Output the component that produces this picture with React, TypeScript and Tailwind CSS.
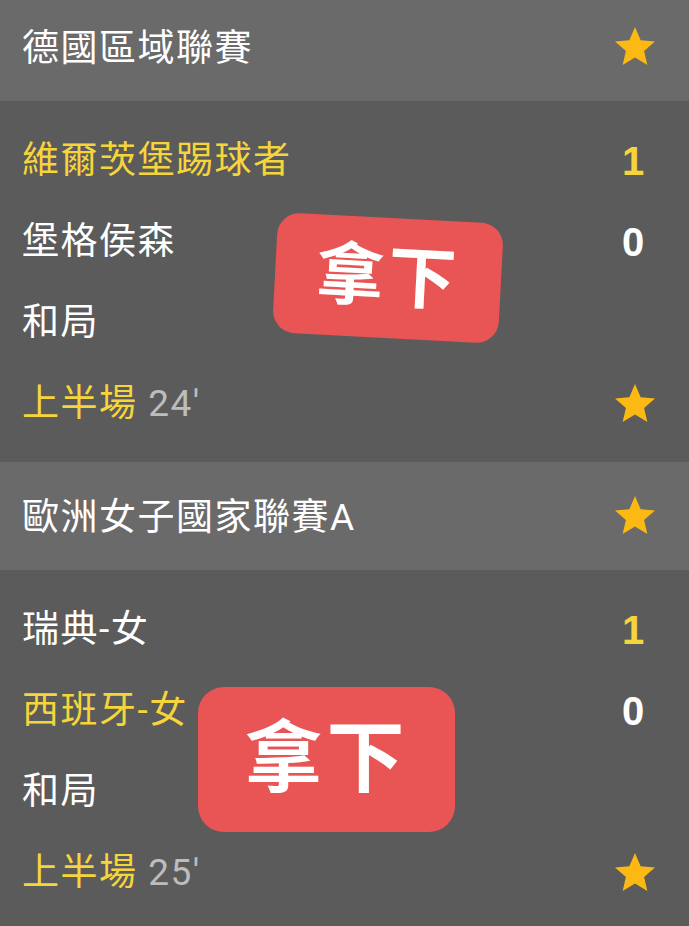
import React from "react";

const FONT = { fontFamily: 'Roboto, "Noto Sans CJK TC", sans-serif' };

type Team = { name: string; score: number; highlight: boolean };

interface MatchData {
  league: string;
  teams: Team[];
  half: string;
  minute: string;
  stamp: "tilted" | "flat";
}

const matches: MatchData[] = [
  {
    league: "德國區域聯賽",
    teams: [
      { name: "維爾茨堡踢球者", score: 1, highlight: true },
      { name: "堡格侯森", score: 0, highlight: false },
    ],
    half: "上半場",
    minute: "24'",
    stamp: "tilted",
  },
  {
    league: "歐洲女子國家聯賽A",
    teams: [
      { name: "瑞典-女", score: 1, highlight: false },
      { name: "西班牙-女", score: 0, highlight: true },
    ],
    half: "上半場",
    minute: "25'",
    stamp: "flat",
  },
];

function Star() {
  return (
    <svg viewBox="0 0 24 24" className="w-[48px] h-[48px] fill-[#fdb913]">
      <path d="M12 17.27L18.18 21l-1.64-7.03L22 9.24l-7.19-.61L12 2 9.19 8.63 2 9.24l5.46 4.73L5.82 21z" />
    </svg>
  );
}

function Stamp({ tilted }: { tilted: boolean }) {
  if (tilted) {
    return (
      <div className="absolute left-[275px] top-[117px] w-[226px] h-[120px] rotate-[3deg] rounded-[22px] bg-[#e95454] flex items-center justify-center">
        <span className="text-white font-bold text-[68px] leading-none tracking-[4px]">
          拿下
        </span>
      </div>
    );
  }
  return (
    <div className="absolute left-[198px] top-[117px] w-[257px] h-[145px] rounded-[26px] bg-[#e95454] flex items-center justify-center">
      <span className="text-white font-bold text-[78px] leading-none tracking-[4px]">
        拿下
      </span>
    </div>
  );
}

function Match({ match }: { match: MatchData }) {
  const top = Math.max(...match.teams.map((t) => t.score));
  return (
    <div>
      <div className="h-[108px] bg-[#6a6a6a] flex items-center justify-between pl-[22px] pr-[30px]">
        <span className="text-white text-[37px] tracking-[1.5px] pt-[4px]">{match.league}</span>
        <Star />
      </div>
      <div className="relative bg-[#5b5b5b] pt-[19px] pb-[18px] pl-[22px] pr-[30px]">
        {match.teams.map((team) => (
          <div key={team.name} className="h-[81px] flex items-center justify-between">
            <span
              className={
                team.highlight
                  ? "text-[#f6d53c] text-[37px] tracking-[1.5px]"
                  : "text-white text-[37px] tracking-[1.5px]"
              }
            >
              {team.name}
            </span>
            <span
              className={
                team.score === top
                  ? "w-[48px] mr-[2px] text-center font-bold text-[40px] text-[#f6d53c]"
                  : "w-[48px] mr-[2px] text-center font-bold text-[40px] text-white"
              }
              style={{ fontFamily: '"Liberation Sans", Arial, sans-serif' }}
            >
              {team.score}
            </span>
          </div>
        ))}
        <div className="h-[81px] flex items-center">
          <span className="text-white text-[37px] tracking-[1.5px]">和局</span>
        </div>
        <div className="h-[81px] flex items-center justify-between">
          <span className="text-[37px] tracking-[1.5px]">
            <span className="text-[#f6d53c]">{match.half}</span>{" "}
            <span className="text-[#bdbdbd]">{match.minute}</span>
          </span>
          <Star />
        </div>
        <Stamp tilted={match.stamp === "tilted"} />
      </div>
    </div>
  );
}

export default function App() {
  return (
    <div className="w-[689px] h-[926px] overflow-hidden bg-[#5b5b5b]" style={FONT}>
      <div className="-mt-[7px]">
        {matches.map((m) => (
          <Match key={m.league} match={m} />
        ))}
      </div>
    </div>
  );
}
